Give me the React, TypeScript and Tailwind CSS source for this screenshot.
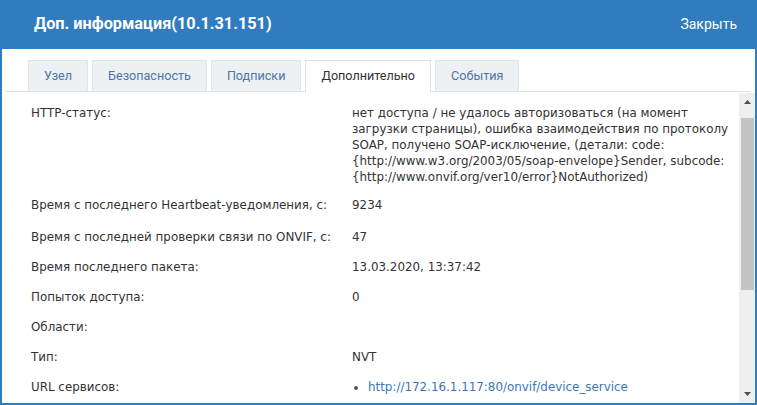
import React from "react";

const tabs = [
  { label: "Узел" },
  { label: "Безопасность" },
  { label: "Подписки" },
  { label: "Дополнительно", active: true },
  { label: "События" },
];

const rows: { label: string; value: React.ReactNode; cls?: string }[] = [
  {
    label: "HTTP-статус:",
    cls: "pb-[5px]",
    value:
      "нет доступа / не удалось авторизоваться (на момент загрузки страницы), ошибка взаимодействия по протоколу SOAP, получено SOAP-исключение, (детали: code: {http://www.w3.org/2003/05/soap-envelope}Sender, subcode: {http://www.onvif.org/ver10/error}NotAuthorized)",
  },
  { label: "Время с последнего Heartbeat-уведомления, с:", value: "9234", cls: "pb-[9px]" },
  { label: "Время с последней проверки связи по ONVIF, с:", value: "47" },
  { label: "Время последнего пакета:", value: "13.03.2020, 13:37:42" },
  { label: "Попыток доступа:", value: "0" },
  { label: "Области:", value: "" },
  { label: "Тип:", value: "NVT" },
  {
    label: "URL сервисов:",
    value: (
      <ul className="list-disc pl-[16px] marker:text-[#555]">
        <li>
          <a className="text-[#3a78b8]">http://172.16.1.117:80/onvif/device_service</a>
        </li>
      </ul>
    ),
  },
];

function Scrollbar() {
  return (
    <div className="w-[16px] shrink-0 bg-[#efefef] flex flex-col items-center mt-[1px]">
      <div className="h-[18px] flex items-center justify-center">
        <svg width="7" height="4" viewBox="0 0 7 4">
          <path d="M0 4 L3.5 0 L7 4 Z" fill="#505050" />
        </svg>
      </div>
      <div className="w-[13px] h-[172px] bg-[#c3c3c3] mt-[7px]" />
      <div className="flex-1" />
      <div className="h-[18px] flex items-center justify-center">
        <svg width="7" height="4" viewBox="0 0 7 4">
          <path d="M0 0 L7 0 L3.5 4 Z" fill="#505050" />
        </svg>
      </div>
    </div>
  );
}

export default function App() {
  return (
    <div className="w-[757px] h-[405px] flex flex-col bg-white overflow-hidden">
      {/* Title bar */}
      <div className="h-[49px] shrink-0 bg-[#317bbf] flex items-center justify-between pl-[34px] pr-[20px] text-white font-['Roboto',sans-serif]">
        <span className="text-[16.3px] font-bold">Доп. информация(10.1.31.151)</span>
        <span className="text-[14px]">Закрыть</span>
      </div>

      <div className="flex-1 min-h-0 flex flex-col border-x-2 border-b-2 border-[#317bbf]">
        {/* Tabs */}
        <div className="mt-[11px] ml-[3px] mr-[5px] border-b border-[#dbe2e8] flex gap-[4px] pl-[23px] font-['Roboto',sans-serif] text-[12.6px]">
          {tabs.map((t) =>
            t.active ? (
              <div
                key={t.label}
                className="h-[32px] -mb-[1px] px-[15px] flex items-center bg-white border border-b-0 border-[#dbe2e8] text-[#333]"
              >
                {t.label}
              </div>
            ) : (
              <div
                key={t.label}
                className="h-[31px] px-[15px] flex items-center bg-[#eef1f4] border border-b-0 border-[#e1e6ea] text-[#4a76a6]"
              >
                {t.label}
              </div>
            )
          )}
        </div>

        {/* Content */}
        <div className="flex-1 min-h-0 flex">
          <div className="flex-1 min-w-0 pt-[6px] pl-[29px] font-['DejaVu_Sans',sans-serif] text-[11.9px] leading-[16px] text-[#333]">
            {rows.map((r) => (
              <div key={r.label} className={"grid grid-cols-[321px_1fr] pt-[7px] " + (r.cls ?? "pb-[7px]")}>
                <div>{r.label}</div>
                <div>{r.value}</div>
              </div>
            ))}
          </div>
          <Scrollbar />
        </div>
      </div>
    </div>
  );
}
